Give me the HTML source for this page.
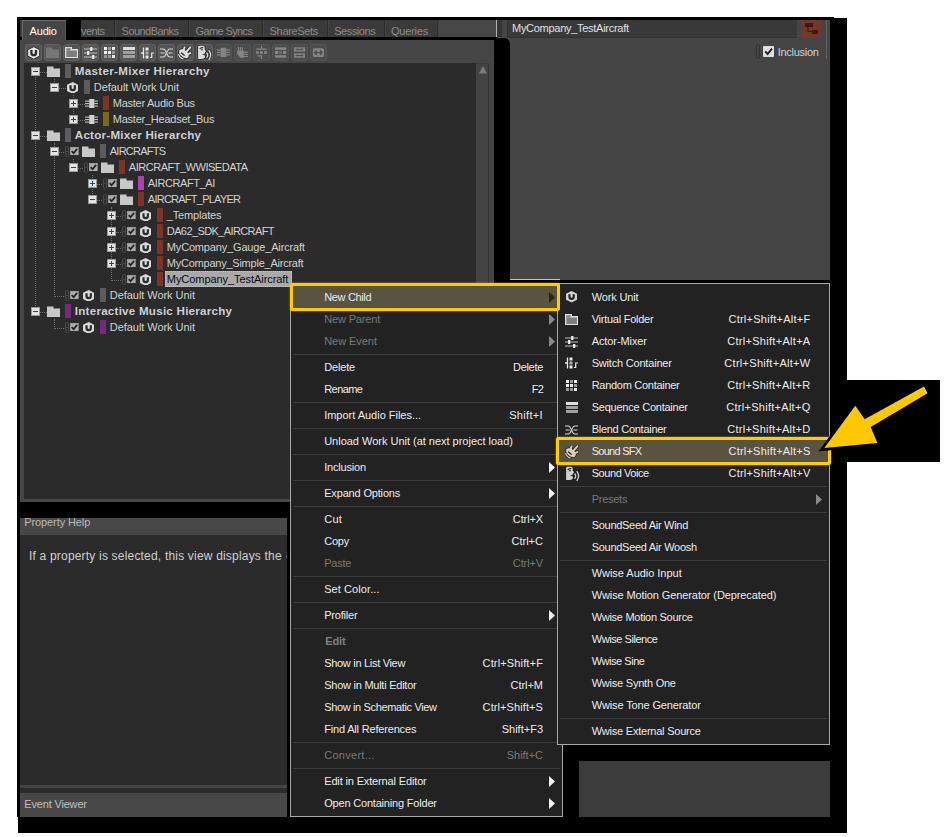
<!DOCTYPE html>
<html><head><meta charset="utf-8"><title>Wwise</title>
<style>
html,body{margin:0;padding:0;background:#fff;}
body{width:950px;height:837px;position:relative;overflow:hidden;font-family:"Liberation Sans",sans-serif;font-size:11px;}
.t{position:absolute;white-space:nowrap;font-family:"Liberation Sans",sans-serif;}
div,svg,span{box-sizing:border-box;}
</style></head><body>
<div style="position:absolute;left:17px;top:17px;width:817px;height:800px;background:#000;"></div>
<div style="position:absolute;left:18px;top:18px;width:829px;height:815px;background:#000;"></div>
<div style="position:absolute;left:20px;top:20px;width:477px;height:17px;background:#3a3a3a;"></div>
<div style="position:absolute;left:437.5px;top:20px;width:58.5px;height:17px;background:#474747;"></div>
<div style="position:absolute;left:496px;top:20px;width:1px;height:17px;background:#b0b0b0;"></div>
<div style="position:absolute;left:497px;top:20px;width:4.5px;height:17px;background:#353535;"></div>
<div style="position:absolute;left:114px;top:20px;width:1px;height:17px;background:#2c2c2c;"></div>
<div style="position:absolute;left:115px;top:20px;width:1px;height:17px;background:#444;"></div>
<div style="position:absolute;left:188px;top:20px;width:1px;height:17px;background:#2c2c2c;"></div>
<div style="position:absolute;left:189px;top:20px;width:1px;height:17px;background:#444;"></div>
<div style="position:absolute;left:262px;top:20px;width:1px;height:17px;background:#2c2c2c;"></div>
<div style="position:absolute;left:263px;top:20px;width:1px;height:17px;background:#444;"></div>
<div style="position:absolute;left:327px;top:20px;width:1px;height:17px;background:#2c2c2c;"></div>
<div style="position:absolute;left:328px;top:20px;width:1px;height:17px;background:#444;"></div>
<div style="position:absolute;left:384px;top:20px;width:1px;height:17px;background:#2c2c2c;"></div>
<div style="position:absolute;left:385px;top:20px;width:1px;height:17px;background:#444;"></div>
<div style="position:absolute;left:437px;top:20px;width:1px;height:17px;background:#2c2c2c;"></div>
<div style="position:absolute;left:438px;top:20px;width:1px;height:17px;background:#444;"></div>
<div style="position:absolute;left:22px;top:20px;width:44px;height:20px;background:#464646;border-top:1px solid #6a6a6a;border-left:1px solid #6a6a6a;border-right:1px solid #555;"></div>
<span class="t" id="tab_audio" style="top:23.0px;height:16px;line-height:16px;color:#ffffff;font-size:11px;letter-spacing:-0.161px;left:29.5px;">Audio</span>
<div style="position:absolute;left:66px;top:20px;width:14.5px;height:17px;background:#000;"></div>
<span class="t" id="tab_events" style="top:23.0px;height:16px;line-height:16px;color:#8c8c8c;font-size:11px;letter-spacing:-0.574px;left:81px;">vents</span>
<span class="t" id="tab_sb" style="top:23.0px;height:16px;line-height:16px;color:#8c8c8c;font-size:11px;letter-spacing:-0.555px;left:121.6px;">SoundBanks</span>
<span class="t" id="tab_gs" style="top:23.0px;height:16px;line-height:16px;color:#8c8c8c;font-size:11px;letter-spacing:-0.619px;left:195.6px;">Game Syncs</span>
<span class="t" id="tab_ss" style="top:23.0px;height:16px;line-height:16px;color:#8c8c8c;font-size:11px;letter-spacing:-0.334px;left:269.6px;">ShareSets</span>
<span class="t" id="tab_se" style="top:23.0px;height:16px;line-height:16px;color:#8c8c8c;font-size:11px;letter-spacing:-0.450px;left:334.2px;">Sessions</span>
<span class="t" id="tab_qu" style="top:23.0px;height:16px;line-height:16px;color:#8c8c8c;font-size:11px;letter-spacing:-0.220px;left:391px;">Queries</span>
<div style="position:absolute;left:66px;top:37px;width:431px;height:3px;background:#000;"></div>
<div style="position:absolute;left:17px;top:37px;width:5px;height:3px;background:#000;"></div>
<div style="position:absolute;left:20px;top:40px;width:474px;height:23px;background:#464646;"></div>
<div style="position:absolute;left:25px;top:44px;width:17px;height:17px;background:#555555;border:1px solid #626262;border-radius:3px;"></div>
<div style="position:absolute;left:44px;top:44px;width:17px;height:17px;background:#555555;border:1px solid #626262;border-radius:3px;"></div>
<div style="position:absolute;left:63px;top:44px;width:17px;height:17px;background:#555555;border:1px solid #626262;border-radius:3px;"></div>
<div style="position:absolute;left:82px;top:44px;width:17px;height:17px;background:#555555;border:1px solid #626262;border-radius:3px;"></div>
<div style="position:absolute;left:101px;top:44px;width:17px;height:17px;background:#555555;border:1px solid #626262;border-radius:3px;"></div>
<div style="position:absolute;left:120px;top:44px;width:17px;height:17px;background:#555555;border:1px solid #626262;border-radius:3px;"></div>
<div style="position:absolute;left:139px;top:44px;width:17px;height:17px;background:#555555;border:1px solid #626262;border-radius:3px;"></div>
<div style="position:absolute;left:158px;top:44px;width:17px;height:17px;background:#555555;border:1px solid #626262;border-radius:3px;"></div>
<div style="position:absolute;left:177px;top:44px;width:17px;height:17px;background:#555555;border:1px solid #626262;border-radius:3px;"></div>
<div style="position:absolute;left:196px;top:44px;width:17px;height:17px;background:#555555;border:1px solid #626262;border-radius:3px;"></div>
<div style="position:absolute;left:215px;top:44px;width:17px;height:17px;background:#4c4c4c;border:1px solid #555;border-radius:3px;"></div>
<div style="position:absolute;left:234px;top:44px;width:17px;height:17px;background:#4c4c4c;border:1px solid #555;border-radius:3px;"></div>
<div style="position:absolute;left:253px;top:44px;width:17px;height:17px;background:#4c4c4c;border:1px solid #555;border-radius:3px;"></div>
<div style="position:absolute;left:272px;top:44px;width:17px;height:17px;background:#4c4c4c;border:1px solid #555;border-radius:3px;"></div>
<div style="position:absolute;left:291px;top:44px;width:17px;height:17px;background:#4c4c4c;border:1px solid #555;border-radius:3px;"></div>
<div style="position:absolute;left:310px;top:44px;width:17px;height:17px;background:#4c4c4c;border:1px solid #555;border-radius:3px;"></div>
<svg style="position:absolute;left:27px;top:45.6px;" width="13.4" height="13.8" viewBox="0 0 13.4 13.8"><path d="M6.7 0.7 L12.7 3.7 L12.7 10.1 L6.7 13.1 L0.7 10.1 L0.7 3.7 Z" fill="#e6e6e6" stroke="#303030" stroke-width="1"/><path d="M4.4 4.1 V6.9 A2.3 2.3 0 0 0 9 6.9 V4.1" fill="none" stroke="#2e2e2e" stroke-width="2.3"/></svg>
<svg style="position:absolute;left:46px;top:47px;" width="13.4" height="11.4" viewBox="0 0 13.4 11.4"><path d="M0 0.4 H6.4 V2.6 H13.4 V11.4 H0 Z" fill="#777777"/></svg>
<svg style="position:absolute;left:64.9px;top:46.8px;" width="13.2" height="11.2" viewBox="0 0 13.2 11.2"><path d="M0.6 0.6 H6.3 V2.8 H12.6 V10.6 H0.6 Z" fill="#7e7e7e" stroke="#dedede" stroke-width="1.4"/><path d="M1.2 3.4H6.6" stroke="#dedede" stroke-width="0.6" opacity="0.5"/></svg>
<svg style="position:absolute;left:84px;top:46.5px;" width="13.2" height="12" viewBox="0 0 13.2 12"><path d="M0 2H13.2 M0 6H13.2 M0 10H13.2" stroke="#cfcfcf" stroke-width="0.9"/><rect x="6.2" y="0" width="2.2" height="4" fill="#f4f4f4"/><rect x="3.1" y="4" width="2.2" height="4" fill="#f4f4f4"/><rect x="8.1" y="8" width="2.2" height="4" fill="#f4f4f4"/></svg>
<svg style="position:absolute;left:104px;top:47px;" width="11" height="11" viewBox="0 0 11 11"><rect x="0" y="0" width="3" height="3" fill="#f0f0f0"/><rect x="4" y="0" width="3" height="3" fill="#9a9a9a"/><rect x="8" y="0" width="3" height="3" fill="#f0f0f0"/><rect x="0" y="4" width="3" height="3" fill="#f0f0f0"/><rect x="4" y="4" width="3" height="3" fill="#f0f0f0"/><rect x="8" y="4" width="3" height="3" fill="#9a9a9a"/><rect x="0" y="8" width="3" height="3" fill="#9a9a9a"/><rect x="4" y="8" width="3" height="3" fill="#9a9a9a"/><rect x="8" y="8" width="3" height="3" fill="#f0f0f0"/></svg>
<svg style="position:absolute;left:122.5px;top:47px;" width="12" height="11" viewBox="0 0 12 11"><rect x="0" y="0" width="12" height="3" fill="#dedede"/><rect x="0" y="4" width="12" height="3" fill="#a0a0a0"/><rect x="0" y="8" width="12" height="3" fill="#a0a0a0"/></svg>
<svg style="position:absolute;left:141px;top:46.5px;" width="13" height="12" viewBox="0 0 13 12"><path d="M0 6H2.5 M2.5 0.5V11.5" stroke="#e8e8e8" stroke-width="1.3" fill="none"/><rect x="4.5" y="0.5" width="3" height="3" fill="#e8e8e8"/><rect x="4.5" y="4.5" width="3" height="3" fill="#b0b0b0"/><rect x="4.5" y="8.5" width="3" height="3" fill="#e8e8e8"/><path d="M9 10.5 H10.7 V6 H13" stroke="#e8e8e8" stroke-width="1.2" fill="none"/></svg>
<svg style="position:absolute;left:160px;top:47.5px;" width="13" height="10" viewBox="0 0 13 10"><path d="M0 1 H3.4 C6.2 1 6.8 9 9.6 9 H13" stroke="#dadada" stroke-width="1.05" fill="none"/><path d="M0 9 H3.4 C6.2 9 6.8 1 9.6 1 H13" stroke="#dadada" stroke-width="1.05" fill="none"/><path d="M0.6 5 H4.6 M8.4 5 H12.4" stroke="#dadada" stroke-width="1" fill="none"/></svg>
<svg style="position:absolute;left:178.4px;top:46px;" width="13.5" height="13.5" viewBox="0 0 13.5 13.5"><path d="M5.5 4.4 L6.6 1.3 M8.3 5.8 L12.3 1.3 M9.8 8.1 L12.4 7.1" stroke-linecap="round" fill="none" stroke="#2a2a2a" stroke-width="3.4"/><ellipse cx="5.9" cy="7.7" rx="5.6" ry="3.4" transform="rotate(40 5.9 7.7)" fill="#2a2a2a" stroke="#2a2a2a" stroke-width="1.6"/><path d="M0.7 8.6 Q1.6 11.8 5 12.9" fill="none" stroke-linecap="round" stroke="#2a2a2a" stroke-width="2.8"/><path d="M5.5 4.4 L6.6 1.3 M8.3 5.8 L12.3 1.3 M9.8 8.1 L12.4 7.1" stroke-linecap="round" fill="none" stroke="#dedede" stroke-width="1.9"/><ellipse cx="5.9" cy="7.7" rx="5.6" ry="3.4" transform="rotate(40 5.9 7.7)" fill="#dedede"/><path d="M0.7 8.6 Q1.6 11.8 5 12.9" fill="none" stroke-linecap="round" stroke="#dedede" stroke-width="1.3"/><path d="M3.6 6.9 L6.2 9.3" stroke="#2a2a2a" stroke-width="1.3" stroke-linecap="round"/></svg>
<svg style="position:absolute;left:197px;top:45.2px;" width="15.5" height="14.5" viewBox="-0.5 -0.8 15.5 14.5"><path d="M0.6 1.4 Q0.6 0 2 0 H5.6 Q7.2 0 7.2 1.8 V3.6 L8.6 5.6 L7.4 6.4 V7.6 L4.6 8.8 L7.4 9.8 V11.8 Q6.4 13.2 4.4 13.2 H0.6 Z" fill="#2a2a2a" stroke="#2a2a2a" stroke-width="1.5" stroke-linejoin="round"/><path d="M9.4 7.2 Q11 9.4 9.4 11.6 M11.6 4.8 Q14.6 9.4 11.6 13.6" stroke="#2a2a2a" stroke-width="2.8" fill="none" stroke-linecap="round"/><path d="M0.6 1.4 Q0.6 0 2 0 H5.6 Q7.2 0 7.2 1.8 V3.6 L8.6 5.6 L7.4 6.4 V7.6 L4.6 8.8 L7.4 9.8 V11.8 Q6.4 13.2 4.4 13.2 H0.6 Z" fill="#dedede"/><path d="M2.2 3.2 Q3.6 1.2 5.8 2 M3.4 4 H5.4" stroke="#2a2a2a" stroke-width="1.1" fill="none"/><path d="M9.4 7.2 Q11 9.4 9.4 11.6 M11.6 4.8 Q14.6 9.4 11.6 13.6" stroke="#dedede" stroke-width="1.3" fill="none" stroke-linecap="round"/></svg>
<svg style="position:absolute;left:215px;top:44px;" width="17" height="17" viewBox="0 0 17 17"><rect x="5.7" y="3.8" width="5.7" height="9.2" fill="#858585"/><path d="M2 6.1H5.7 M2 8.4H5.7 M2 10.8H5.7 M11.4 6.1H15 M11.4 8.4H15 M11.4 10.8H15" stroke="#858585" stroke-width="1.2"/></svg>
<svg style="position:absolute;left:234px;top:44px;" width="17" height="17" viewBox="0 0 17 17"><path d="M3.2 6.7 H9.9 V13.7 H6.4 L3.2 10 Z" fill="#858585"/><path d="M4.4 3V7 M6.4 3V7 M8.4 3V7" stroke="#858585" stroke-width="1.1"/><path d="M9.9 8.4H13.9 M9.9 10.5H13.9 M9.9 12.5H13.9" stroke="#858585" stroke-width="1.1"/></svg>
<svg style="position:absolute;left:253px;top:44px;" width="17" height="17" viewBox="0 0 17 17"><path d="M8.5 1.7V5.1 M3.1 5.1H13.8" stroke="#858585" stroke-width="1.2" fill="none"/><rect x="3.1" y="7.1" width="2.6" height="2.8" fill="#858585"/><rect x="7" y="7.1" width="2.8" height="2.8" fill="#858585"/><rect x="11.1" y="7.1" width="2.7" height="2.8" fill="#858585"/><path d="M4.4 11.8 H8.5 V15" stroke="#858585" stroke-width="1.2" fill="none"/></svg>
<svg style="position:absolute;left:272px;top:44px;" width="17" height="17" viewBox="0 0 17 17"><rect x="3" y="3.3" width="11.2" height="2.6" fill="#858585"/><rect x="3" y="7.1" width="3.2" height="2.8" fill="#8c8c8c"/><rect x="7.2" y="7.1" width="2.8" height="2.8" fill="#6c6c6c"/><rect x="11" y="7.1" width="3.2" height="2.8" fill="#8c8c8c"/><rect x="3" y="11.2" width="11.2" height="2.5" fill="#858585"/></svg>
<svg style="position:absolute;left:291px;top:44px;" width="17" height="17" viewBox="0 0 17 17"><rect x="3" y="3.3" width="11" height="4.3" fill="#858585"/><rect x="3" y="9.3" width="11" height="4.4" fill="#858585"/><path d="M4.6 5.45H12.4 M4.6 11.5H12.4" stroke="#4f4f4f" stroke-width="1"/><path d="M5 5.45 L6.4 4.2 L7.2 5.45 L6.4 6.7 Z M12 5.45 L10.6 4.2 L9.8 5.45 L10.6 6.7 Z M5 11.5 L6.4 10.25 L7.2 11.5 L6.4 12.75 Z M12 11.5 L10.6 10.25 L9.8 11.5 L10.6 12.75 Z" fill="#4f4f4f"/></svg>
<svg style="position:absolute;left:310px;top:44px;" width="17" height="17" viewBox="0 0 17 17"><rect x="2.9" y="4.2" width="11.1" height="8.8" rx="1.6" fill="#858585"/><path d="M3.8 8.6 L6.4 5.8 L7.6 8.6 L6.4 11.4 Z M13.1 8.6 L10.5 5.8 L9.3 8.6 L10.5 11.4 Z" fill="#4f4f4f"/><path d="M6 8.6H11" stroke="#4f4f4f" stroke-width="1.1"/></svg>
<div style="position:absolute;left:20px;top:63px;width:474px;height:439px;background:#464646;"></div>
<div style="position:absolute;left:23.5px;top:63px;width:452px;height:436px;background:#2b2b2b;"></div>
<div style="position:absolute;left:475.8px;top:63px;width:13.7px;height:436px;background:#434343;border-right:1px solid #363636;border-top:1px solid #3a3a3a;"></div>
<svg style="position:absolute;left:478.5px;top:66.3px;" width="8" height="8" viewBox="0 0 8 8"><path d="M4 0 L8 7.5 H0 Z" fill="#7c7c7c"/></svg>
<div style="position:absolute;left:35px;top:76.5px;width:0;height:231.0px;border-left:1px dotted #707070;"></div>
<div style="position:absolute;left:54px;top:78.5px;width:0;height:5.0px;border-left:1px dotted #707070;"></div>
<div style="position:absolute;left:73px;top:94.5px;width:0;height:21.0px;border-left:1px dotted #707070;"></div>
<div style="position:absolute;left:54px;top:142.5px;width:0;height:154.0px;border-left:1px dotted #707070;"></div>
<div style="position:absolute;left:73px;top:158.5px;width:0;height:5.0px;border-left:1px dotted #707070;"></div>
<div style="position:absolute;left:92px;top:174.5px;width:0;height:21.0px;border-left:1px dotted #707070;"></div>
<div style="position:absolute;left:111px;top:206.5px;width:0;height:74.0px;border-left:1px dotted #707070;"></div>
<div style="position:absolute;left:54px;top:318.5px;width:0;height:10.0px;border-left:1px dotted #707070;"></div>
<div style="position:absolute;left:40px;top:71.5px;width:7px;height:0;border-top:1px dotted #707070;"></div>
<div style="position:absolute;left:31px;top:67.0px;width:9px;height:9px;background:#e4e4e4;border:1px solid #9a9a9a;"></div>
<div style="position:absolute;left:33px;top:71.0px;width:5px;height:1px;background:#2a3a9a;"></div>
<svg style="position:absolute;left:47px;top:66.0px;" width="13" height="11" viewBox="0 0 13 11"><path d="M0 0.5 H6.5 V2.5 H13 V11 H0 Z" fill="#c8c8c8"/></svg>
<div style="position:absolute;left:65.2px;top:63.9px;width:5.8px;height:14px;background:#5c5c5c;"></div>
<span class="t" id="tr0" style="top:63.0px;height:16px;line-height:16px;color:#cdd0d8;font-size:11.6px;letter-spacing:0.308px;font-weight:bold;left:74.8px;">Master-Mixer Hierarchy</span>
<div style="position:absolute;left:59px;top:87.5px;width:7px;height:0;border-top:1px dotted #707070;"></div>
<div style="position:absolute;left:50px;top:83.0px;width:9px;height:9px;background:#e4e4e4;border:1px solid #9a9a9a;"></div>
<div style="position:absolute;left:52px;top:87.0px;width:5px;height:1px;background:#2a3a9a;"></div>
<svg style="position:absolute;left:67px;top:81.5px;" width="11.399999999999999" height="11.78" viewBox="0 0 12 12.4"><path d="M6 0 L12 3 L12 9.4 L6 12.4 L0 9.4 L0 3 Z" fill="#dadada"/><path d="M3.7 3.4 V6.2 A2.3 2.3 0 0 0 8.3 6.2 V3.4" fill="none" stroke="#2b2b2b" stroke-width="2.3"/></svg>
<div style="position:absolute;left:84.2px;top:79.9px;width:5.8px;height:14px;background:#5c5c5c;"></div>
<span class="t" id="tr1" style="top:79.0px;height:16px;line-height:16px;color:#d2d2d2;font-size:11px;letter-spacing:-0.050px;left:93.8px;">Default Work Unit</span>
<div style="position:absolute;left:78px;top:103.5px;width:7px;height:0;border-top:1px dotted #707070;"></div>
<div style="position:absolute;left:69px;top:99.0px;width:9px;height:9px;background:#e4e4e4;border:1px solid #9a9a9a;"></div>
<div style="position:absolute;left:71px;top:103.0px;width:5px;height:1px;background:#2a3a9a;"></div>
<div style="position:absolute;left:73px;top:101.0px;width:1px;height:5px;background:#2a3a9a;"></div>
<svg style="position:absolute;left:84.7px;top:98.9px;" width="13.4" height="9.2" viewBox="0 0 13.4 9.2"><rect x="4.2" y="0" width="5.2" height="9.2" fill="#d0d0d0"/><path d="M0 2.1H4.2 M0 4.6H4.2 M0 7.1H4.2 M9.4 2.1H13.4 M9.4 4.6H13.4 M9.4 7.1H13.4" stroke="#d0d0d0" stroke-width="1"/></svg>
<div style="position:absolute;left:103.2px;top:95.9px;width:5.8px;height:14px;background:#7a3525;"></div>
<span class="t" id="tr2" style="top:95.0px;height:16px;line-height:16px;color:#d2d2d2;font-size:11px;letter-spacing:-0.268px;left:112.8px;">Master Audio Bus</span>
<div style="position:absolute;left:78px;top:119.5px;width:7px;height:0;border-top:1px dotted #707070;"></div>
<div style="position:absolute;left:69px;top:115.0px;width:9px;height:9px;background:#e4e4e4;border:1px solid #9a9a9a;"></div>
<div style="position:absolute;left:71px;top:119.0px;width:5px;height:1px;background:#2a3a9a;"></div>
<div style="position:absolute;left:73px;top:117.0px;width:1px;height:5px;background:#2a3a9a;"></div>
<svg style="position:absolute;left:84.7px;top:114.9px;" width="13.4" height="9.2" viewBox="0 0 13.4 9.2"><rect x="4.2" y="0" width="5.2" height="9.2" fill="#d0d0d0"/><path d="M0 2.1H4.2 M0 4.6H4.2 M0 7.1H4.2 M9.4 2.1H13.4 M9.4 4.6H13.4 M9.4 7.1H13.4" stroke="#d0d0d0" stroke-width="1"/></svg>
<div style="position:absolute;left:103.2px;top:111.9px;width:5.8px;height:14px;background:#7a6a12;"></div>
<span class="t" id="tr3" style="top:111.0px;height:16px;line-height:16px;color:#d2d2d2;font-size:11px;letter-spacing:-0.241px;left:112.8px;">Master_Headset_Bus</span>
<div style="position:absolute;left:40px;top:135.5px;width:7px;height:0;border-top:1px dotted #707070;"></div>
<div style="position:absolute;left:31px;top:131.0px;width:9px;height:9px;background:#e4e4e4;border:1px solid #9a9a9a;"></div>
<div style="position:absolute;left:33px;top:135.0px;width:5px;height:1px;background:#2a3a9a;"></div>
<svg style="position:absolute;left:47px;top:130.0px;" width="13" height="11" viewBox="0 0 13 11"><path d="M0 0.5 H6.5 V2.5 H13 V11 H0 Z" fill="#c8c8c8"/></svg>
<div style="position:absolute;left:65.2px;top:127.9px;width:5.8px;height:14px;background:#5c5c5c;"></div>
<span class="t" id="tr4" style="top:127.0px;height:16px;line-height:16px;color:#cdd0d8;font-size:11.6px;letter-spacing:0.253px;font-weight:bold;left:74.8px;">Actor-Mixer Hierarchy</span>
<div style="position:absolute;left:59px;top:151.5px;width:7px;height:0;border-top:1px dotted #707070;"></div>
<div style="position:absolute;left:50px;top:147.0px;width:9px;height:9px;background:#e4e4e4;border:1px solid #9a9a9a;"></div>
<div style="position:absolute;left:52px;top:151.0px;width:5px;height:1px;background:#2a3a9a;"></div>
<div style="position:absolute;left:65px;top:146.0px;width:3.5px;height:10.5px;background:transparent;border:1px solid #4c4c4c;border-radius:1.7px;"></div>
<div style="position:absolute;left:65.5px;top:150.9px;width:2.5px;height:1px;background:#454545;"></div>
<svg style="position:absolute;left:70px;top:146.9px;" width="8.6" height="8.6" viewBox="0 0 8.6 8.6"><rect x="0" y="0" width="8.6" height="8.6" fill="#acacac"/><rect x="0.25" y="0.25" width="8.1" height="8.1" fill="none" stroke="#8a8a8a" stroke-width="0.5"/><path d="M1.7 4.1 L3.6 6.2 L7.1 1.9" stroke="#1e1e1e" stroke-width="1.7" fill="none"/></svg>
<svg style="position:absolute;left:82px;top:146.0px;" width="13" height="11" viewBox="0 0 13 11"><path d="M0 0.5 H6.5 V2.5 H13 V11 H0 Z" fill="#c8c8c8"/></svg>
<div style="position:absolute;left:100.2px;top:143.9px;width:5.8px;height:14px;background:#5c5c5c;"></div>
<span class="t" id="tr5" style="top:143.0px;height:16px;line-height:16px;color:#d2d2d2;font-size:11px;letter-spacing:-0.768px;left:109.8px;">AIRCRAFTS</span>
<div style="position:absolute;left:78px;top:167.5px;width:7px;height:0;border-top:1px dotted #707070;"></div>
<div style="position:absolute;left:69px;top:163.0px;width:9px;height:9px;background:#e4e4e4;border:1px solid #9a9a9a;"></div>
<div style="position:absolute;left:71px;top:167.0px;width:5px;height:1px;background:#2a3a9a;"></div>
<div style="position:absolute;left:84px;top:162.0px;width:3.5px;height:10.5px;background:transparent;border:1px solid #4c4c4c;border-radius:1.7px;"></div>
<div style="position:absolute;left:84.5px;top:166.9px;width:2.5px;height:1px;background:#454545;"></div>
<svg style="position:absolute;left:89px;top:162.9px;" width="8.6" height="8.6" viewBox="0 0 8.6 8.6"><rect x="0" y="0" width="8.6" height="8.6" fill="#acacac"/><rect x="0.25" y="0.25" width="8.1" height="8.1" fill="none" stroke="#8a8a8a" stroke-width="0.5"/><path d="M1.7 4.1 L3.6 6.2 L7.1 1.9" stroke="#1e1e1e" stroke-width="1.7" fill="none"/></svg>
<svg style="position:absolute;left:101px;top:162.0px;" width="13" height="11" viewBox="0 0 13 11"><path d="M0 0.5 H6.5 V2.5 H13 V11 H0 Z" fill="#c8c8c8"/></svg>
<div style="position:absolute;left:119.2px;top:159.9px;width:5.8px;height:14px;background:#7a3525;"></div>
<span class="t" id="tr6" style="top:159.0px;height:16px;line-height:16px;color:#d2d2d2;font-size:11px;letter-spacing:-0.478px;left:128.8px;">AIRCRAFT_WWISEDATA</span>
<div style="position:absolute;left:97px;top:183.5px;width:7px;height:0;border-top:1px dotted #707070;"></div>
<div style="position:absolute;left:88px;top:179.0px;width:9px;height:9px;background:#e4e4e4;border:1px solid #9a9a9a;"></div>
<div style="position:absolute;left:90px;top:183.0px;width:5px;height:1px;background:#2a3a9a;"></div>
<div style="position:absolute;left:92px;top:181.0px;width:1px;height:5px;background:#2a3a9a;"></div>
<div style="position:absolute;left:103px;top:178.0px;width:3.5px;height:10.5px;background:transparent;border:1px solid #4c4c4c;border-radius:1.7px;"></div>
<div style="position:absolute;left:103.5px;top:182.9px;width:2.5px;height:1px;background:#454545;"></div>
<svg style="position:absolute;left:108px;top:178.9px;" width="8.6" height="8.6" viewBox="0 0 8.6 8.6"><rect x="0" y="0" width="8.6" height="8.6" fill="#acacac"/><rect x="0.25" y="0.25" width="8.1" height="8.1" fill="none" stroke="#8a8a8a" stroke-width="0.5"/><path d="M1.7 4.1 L3.6 6.2 L7.1 1.9" stroke="#1e1e1e" stroke-width="1.7" fill="none"/></svg>
<svg style="position:absolute;left:120px;top:178.0px;" width="13" height="11" viewBox="0 0 13 11"><path d="M0 0.5 H6.5 V2.5 H13 V11 H0 Z" fill="#c8c8c8"/></svg>
<div style="position:absolute;left:138.2px;top:175.9px;width:5.8px;height:14px;background:#b040b0;"></div>
<span class="t" id="tr7" style="top:175.0px;height:16px;line-height:16px;color:#d2d2d2;font-size:11px;letter-spacing:-0.402px;left:147.79999999999998px;">AIRCRAFT_AI</span>
<div style="position:absolute;left:97px;top:199.5px;width:7px;height:0;border-top:1px dotted #707070;"></div>
<div style="position:absolute;left:88px;top:195.0px;width:9px;height:9px;background:#e4e4e4;border:1px solid #9a9a9a;"></div>
<div style="position:absolute;left:90px;top:199.0px;width:5px;height:1px;background:#2a3a9a;"></div>
<div style="position:absolute;left:103px;top:194.0px;width:3.5px;height:10.5px;background:transparent;border:1px solid #4c4c4c;border-radius:1.7px;"></div>
<div style="position:absolute;left:103.5px;top:198.9px;width:2.5px;height:1px;background:#454545;"></div>
<svg style="position:absolute;left:108px;top:194.9px;" width="8.6" height="8.6" viewBox="0 0 8.6 8.6"><rect x="0" y="0" width="8.6" height="8.6" fill="#acacac"/><rect x="0.25" y="0.25" width="8.1" height="8.1" fill="none" stroke="#8a8a8a" stroke-width="0.5"/><path d="M1.7 4.1 L3.6 6.2 L7.1 1.9" stroke="#1e1e1e" stroke-width="1.7" fill="none"/></svg>
<svg style="position:absolute;left:120px;top:194.0px;" width="13" height="11" viewBox="0 0 13 11"><path d="M0 0.5 H6.5 V2.5 H13 V11 H0 Z" fill="#c8c8c8"/></svg>
<div style="position:absolute;left:138.2px;top:191.9px;width:5.8px;height:14px;background:#7a3525;"></div>
<span class="t" id="tr8" style="top:191.0px;height:16px;line-height:16px;color:#d2d2d2;font-size:11px;letter-spacing:-0.751px;left:147.79999999999998px;">AIRCRAFT_PLAYER</span>
<div style="position:absolute;left:116px;top:215.5px;width:7px;height:0;border-top:1px dotted #707070;"></div>
<div style="position:absolute;left:107px;top:211.0px;width:9px;height:9px;background:#e4e4e4;border:1px solid #9a9a9a;"></div>
<div style="position:absolute;left:109px;top:215.0px;width:5px;height:1px;background:#2a3a9a;"></div>
<div style="position:absolute;left:111px;top:213.0px;width:1px;height:5px;background:#2a3a9a;"></div>
<div style="position:absolute;left:122px;top:210.0px;width:3.5px;height:10.5px;background:transparent;border:1px solid #4c4c4c;border-radius:1.7px;"></div>
<div style="position:absolute;left:122.5px;top:214.9px;width:2.5px;height:1px;background:#454545;"></div>
<svg style="position:absolute;left:127px;top:210.9px;" width="8.6" height="8.6" viewBox="0 0 8.6 8.6"><rect x="0" y="0" width="8.6" height="8.6" fill="#acacac"/><rect x="0.25" y="0.25" width="8.1" height="8.1" fill="none" stroke="#8a8a8a" stroke-width="0.5"/><path d="M1.7 4.1 L3.6 6.2 L7.1 1.9" stroke="#1e1e1e" stroke-width="1.7" fill="none"/></svg>
<svg style="position:absolute;left:140px;top:209.5px;" width="11.399999999999999" height="11.78" viewBox="0 0 12 12.4"><path d="M6 0 L12 3 L12 9.4 L6 12.4 L0 9.4 L0 3 Z" fill="#dadada"/><path d="M3.7 3.4 V6.2 A2.3 2.3 0 0 0 8.3 6.2 V3.4" fill="none" stroke="#2b2b2b" stroke-width="2.3"/></svg>
<div style="position:absolute;left:157.2px;top:207.9px;width:5.8px;height:14px;background:#7a3525;"></div>
<span class="t" id="tr9" style="top:207.0px;height:16px;line-height:16px;color:#d2d2d2;font-size:11px;letter-spacing:-0.173px;left:166.79999999999998px;">_Templates</span>
<div style="position:absolute;left:116px;top:231.5px;width:7px;height:0;border-top:1px dotted #707070;"></div>
<div style="position:absolute;left:107px;top:227.0px;width:9px;height:9px;background:#e4e4e4;border:1px solid #9a9a9a;"></div>
<div style="position:absolute;left:109px;top:231.0px;width:5px;height:1px;background:#2a3a9a;"></div>
<div style="position:absolute;left:111px;top:229.0px;width:1px;height:5px;background:#2a3a9a;"></div>
<div style="position:absolute;left:122px;top:226.0px;width:3.5px;height:10.5px;background:transparent;border:1px solid #4c4c4c;border-radius:1.7px;"></div>
<div style="position:absolute;left:122.5px;top:230.9px;width:2.5px;height:1px;background:#454545;"></div>
<svg style="position:absolute;left:127px;top:226.9px;" width="8.6" height="8.6" viewBox="0 0 8.6 8.6"><rect x="0" y="0" width="8.6" height="8.6" fill="#acacac"/><rect x="0.25" y="0.25" width="8.1" height="8.1" fill="none" stroke="#8a8a8a" stroke-width="0.5"/><path d="M1.7 4.1 L3.6 6.2 L7.1 1.9" stroke="#1e1e1e" stroke-width="1.7" fill="none"/></svg>
<svg style="position:absolute;left:140px;top:225.5px;" width="11.399999999999999" height="11.78" viewBox="0 0 12 12.4"><path d="M6 0 L12 3 L12 9.4 L6 12.4 L0 9.4 L0 3 Z" fill="#dadada"/><path d="M3.7 3.4 V6.2 A2.3 2.3 0 0 0 8.3 6.2 V3.4" fill="none" stroke="#2b2b2b" stroke-width="2.3"/></svg>
<div style="position:absolute;left:157.2px;top:223.9px;width:5.8px;height:14px;background:#7a3525;"></div>
<span class="t" id="tr10" style="top:223.0px;height:16px;line-height:16px;color:#d2d2d2;font-size:11px;letter-spacing:-0.605px;left:166.79999999999998px;">DA62_SDK_AIRCRAFT</span>
<div style="position:absolute;left:116px;top:247.5px;width:7px;height:0;border-top:1px dotted #707070;"></div>
<div style="position:absolute;left:107px;top:243.0px;width:9px;height:9px;background:#e4e4e4;border:1px solid #9a9a9a;"></div>
<div style="position:absolute;left:109px;top:247.0px;width:5px;height:1px;background:#2a3a9a;"></div>
<div style="position:absolute;left:111px;top:245.0px;width:1px;height:5px;background:#2a3a9a;"></div>
<div style="position:absolute;left:122px;top:242.0px;width:3.5px;height:10.5px;background:transparent;border:1px solid #4c4c4c;border-radius:1.7px;"></div>
<div style="position:absolute;left:122.5px;top:246.9px;width:2.5px;height:1px;background:#454545;"></div>
<svg style="position:absolute;left:127px;top:242.9px;" width="8.6" height="8.6" viewBox="0 0 8.6 8.6"><rect x="0" y="0" width="8.6" height="8.6" fill="#acacac"/><rect x="0.25" y="0.25" width="8.1" height="8.1" fill="none" stroke="#8a8a8a" stroke-width="0.5"/><path d="M1.7 4.1 L3.6 6.2 L7.1 1.9" stroke="#1e1e1e" stroke-width="1.7" fill="none"/></svg>
<svg style="position:absolute;left:140px;top:241.5px;" width="11.399999999999999" height="11.78" viewBox="0 0 12 12.4"><path d="M6 0 L12 3 L12 9.4 L6 12.4 L0 9.4 L0 3 Z" fill="#dadada"/><path d="M3.7 3.4 V6.2 A2.3 2.3 0 0 0 8.3 6.2 V3.4" fill="none" stroke="#2b2b2b" stroke-width="2.3"/></svg>
<div style="position:absolute;left:157.2px;top:239.9px;width:5.8px;height:14px;background:#7a3525;"></div>
<span class="t" id="tr11" style="top:239.0px;height:16px;line-height:16px;color:#d2d2d2;font-size:11px;letter-spacing:-0.163px;left:166.79999999999998px;">MyCompany_Gauge_Aircraft</span>
<div style="position:absolute;left:116px;top:263.5px;width:7px;height:0;border-top:1px dotted #707070;"></div>
<div style="position:absolute;left:107px;top:259.0px;width:9px;height:9px;background:#e4e4e4;border:1px solid #9a9a9a;"></div>
<div style="position:absolute;left:109px;top:263.0px;width:5px;height:1px;background:#2a3a9a;"></div>
<div style="position:absolute;left:111px;top:261.0px;width:1px;height:5px;background:#2a3a9a;"></div>
<div style="position:absolute;left:122px;top:258.0px;width:3.5px;height:10.5px;background:transparent;border:1px solid #4c4c4c;border-radius:1.7px;"></div>
<div style="position:absolute;left:122.5px;top:262.9px;width:2.5px;height:1px;background:#454545;"></div>
<svg style="position:absolute;left:127px;top:258.9px;" width="8.6" height="8.6" viewBox="0 0 8.6 8.6"><rect x="0" y="0" width="8.6" height="8.6" fill="#acacac"/><rect x="0.25" y="0.25" width="8.1" height="8.1" fill="none" stroke="#8a8a8a" stroke-width="0.5"/><path d="M1.7 4.1 L3.6 6.2 L7.1 1.9" stroke="#1e1e1e" stroke-width="1.7" fill="none"/></svg>
<svg style="position:absolute;left:140px;top:257.5px;" width="11.399999999999999" height="11.78" viewBox="0 0 12 12.4"><path d="M6 0 L12 3 L12 9.4 L6 12.4 L0 9.4 L0 3 Z" fill="#dadada"/><path d="M3.7 3.4 V6.2 A2.3 2.3 0 0 0 8.3 6.2 V3.4" fill="none" stroke="#2b2b2b" stroke-width="2.3"/></svg>
<div style="position:absolute;left:157.2px;top:255.9px;width:5.8px;height:14px;background:#7a3525;"></div>
<span class="t" id="tr12" style="top:255.0px;height:16px;line-height:16px;color:#d2d2d2;font-size:11px;letter-spacing:-0.235px;left:166.79999999999998px;">MyCompany_Simple_Aircraft</span>
<div style="position:absolute;left:111px;top:279.5px;width:12px;height:0;border-top:1px dotted #707070;"></div>
<div style="position:absolute;left:122px;top:274.0px;width:3.5px;height:10.5px;background:transparent;border:1px solid #4c4c4c;border-radius:1.7px;"></div>
<div style="position:absolute;left:122.5px;top:278.9px;width:2.5px;height:1px;background:#454545;"></div>
<svg style="position:absolute;left:127px;top:274.9px;" width="8.6" height="8.6" viewBox="0 0 8.6 8.6"><rect x="0" y="0" width="8.6" height="8.6" fill="#acacac"/><rect x="0.25" y="0.25" width="8.1" height="8.1" fill="none" stroke="#8a8a8a" stroke-width="0.5"/><path d="M1.7 4.1 L3.6 6.2 L7.1 1.9" stroke="#1e1e1e" stroke-width="1.7" fill="none"/></svg>
<svg style="position:absolute;left:140px;top:273.5px;" width="11.399999999999999" height="11.78" viewBox="0 0 12 12.4"><path d="M6 0 L12 3 L12 9.4 L6 12.4 L0 9.4 L0 3 Z" fill="#dadada"/><path d="M3.7 3.4 V6.2 A2.3 2.3 0 0 0 8.3 6.2 V3.4" fill="none" stroke="#2b2b2b" stroke-width="2.3"/></svg>
<div style="position:absolute;left:157.2px;top:271.9px;width:5.8px;height:14px;background:#7a3525;"></div>
<div style="position:absolute;left:164.5px;top:271px;width:127.5px;height:15.5px;background:#a9a9a9;border:1px dotted #c4c4c4;"></div>
<span class="t" id="tr13" style="top:271.0px;height:16px;line-height:16px;color:#0a0a14;font-size:11px;letter-spacing:-0.061px;left:166.79999999999998px;">MyCompany_TestAircraft</span>
<div style="position:absolute;left:54px;top:295.5px;width:12px;height:0;border-top:1px dotted #707070;"></div>
<div style="position:absolute;left:65px;top:290.0px;width:3.5px;height:10.5px;background:transparent;border:1px solid #4c4c4c;border-radius:1.7px;"></div>
<div style="position:absolute;left:65.5px;top:294.9px;width:2.5px;height:1px;background:#454545;"></div>
<svg style="position:absolute;left:70px;top:290.9px;" width="8.6" height="8.6" viewBox="0 0 8.6 8.6"><rect x="0" y="0" width="8.6" height="8.6" fill="#acacac"/><rect x="0.25" y="0.25" width="8.1" height="8.1" fill="none" stroke="#8a8a8a" stroke-width="0.5"/><path d="M1.7 4.1 L3.6 6.2 L7.1 1.9" stroke="#1e1e1e" stroke-width="1.7" fill="none"/></svg>
<svg style="position:absolute;left:83px;top:289.5px;" width="11.399999999999999" height="11.78" viewBox="0 0 12 12.4"><path d="M6 0 L12 3 L12 9.4 L6 12.4 L0 9.4 L0 3 Z" fill="#dadada"/><path d="M3.7 3.4 V6.2 A2.3 2.3 0 0 0 8.3 6.2 V3.4" fill="none" stroke="#2b2b2b" stroke-width="2.3"/></svg>
<div style="position:absolute;left:100.2px;top:287.9px;width:5.8px;height:14px;background:#5c5c5c;"></div>
<span class="t" id="tr14" style="top:287.0px;height:16px;line-height:16px;color:#d2d2d2;font-size:11px;letter-spacing:-0.050px;left:109.8px;">Default Work Unit</span>
<div style="position:absolute;left:40px;top:311.5px;width:7px;height:0;border-top:1px dotted #707070;"></div>
<div style="position:absolute;left:31px;top:307.0px;width:9px;height:9px;background:#e4e4e4;border:1px solid #9a9a9a;"></div>
<div style="position:absolute;left:33px;top:311.0px;width:5px;height:1px;background:#2a3a9a;"></div>
<svg style="position:absolute;left:47px;top:306.0px;" width="13" height="11" viewBox="0 0 13 11"><path d="M0 0.5 H6.5 V2.5 H13 V11 H0 Z" fill="#c8c8c8"/></svg>
<div style="position:absolute;left:65.2px;top:303.9px;width:5.8px;height:14px;background:#7c277f;"></div>
<span class="t" id="tr15" style="top:303.0px;height:16px;line-height:16px;color:#cdd0d8;font-size:11.6px;letter-spacing:0.246px;font-weight:bold;left:74.8px;">Interactive Music Hierarchy</span>
<div style="position:absolute;left:54px;top:327.5px;width:12px;height:0;border-top:1px dotted #707070;"></div>
<div style="position:absolute;left:65px;top:322.0px;width:3.5px;height:10.5px;background:transparent;border:1px solid #4c4c4c;border-radius:1.7px;"></div>
<div style="position:absolute;left:65.5px;top:326.9px;width:2.5px;height:1px;background:#454545;"></div>
<svg style="position:absolute;left:70px;top:322.9px;" width="8.6" height="8.6" viewBox="0 0 8.6 8.6"><rect x="0" y="0" width="8.6" height="8.6" fill="#acacac"/><rect x="0.25" y="0.25" width="8.1" height="8.1" fill="none" stroke="#8a8a8a" stroke-width="0.5"/><path d="M1.7 4.1 L3.6 6.2 L7.1 1.9" stroke="#1e1e1e" stroke-width="1.7" fill="none"/></svg>
<svg style="position:absolute;left:83px;top:321.5px;" width="11.399999999999999" height="11.78" viewBox="0 0 12 12.4"><path d="M6 0 L12 3 L12 9.4 L6 12.4 L0 9.4 L0 3 Z" fill="#dadada"/><path d="M3.7 3.4 V6.2 A2.3 2.3 0 0 0 8.3 6.2 V3.4" fill="none" stroke="#2b2b2b" stroke-width="2.3"/></svg>
<div style="position:absolute;left:100.2px;top:319.9px;width:5.8px;height:14px;background:#7c277f;"></div>
<span class="t" id="tr16" style="top:319.0px;height:16px;line-height:16px;color:#d2d2d2;font-size:11px;letter-spacing:-0.050px;left:109.8px;">Default Work Unit</span>
<div style="position:absolute;left:501.5px;top:20px;width:328.5px;height:17px;background:#454545;"></div>
<div style="position:absolute;left:497px;top:37px;width:333px;height:243px;background:#454545;"></div>
<div style="position:absolute;left:494px;top:37.5px;width:16px;height:250px;background:#000;border-top-right-radius:6px;"></div>
<div style="position:absolute;left:507px;top:20px;width:290px;height:17.5px;background:#393939;border-bottom:1px solid #303030;border-left:1px solid #303030;"></div>
<span class="t" id="rp_title" style="top:19.6px;height:16px;line-height:16px;color:#e0e0e0;font-size:11px;letter-spacing:-0.280px;left:512px;">MyCompany_TestAircraft</span>
<div style="position:absolute;left:801px;top:20px;width:20px;height:17.5px;background:#743829;"></div>
<svg style="position:absolute;left:804.5px;top:23px;" width="14" height="12" viewBox="0 0 14 12"><rect x="0" y="0" width="8" height="4" fill="#3e1810"/><rect x="7" y="7" width="6" height="4" fill="#3e1810"/><path d="M3 4V8.5H7" stroke="#3e1810" stroke-width="1.2" fill="none"/></svg>
<div style="position:absolute;left:826.2px;top:20px;width:1.3px;height:39px;background:#626262;"></div>
<div style="position:absolute;left:755.5px;top:44px;width:4px;height:15px;background:transparent;border:1px solid #333;border-radius:2px;"></div>
<svg style="position:absolute;left:763px;top:45.5px;" width="11" height="11" viewBox="0 0 11 11"><rect x="0" y="0" width="11" height="11" rx="1" fill="#e0e0e0"/><path d="M2.2 5.4 L4.6 8 L9 2.6" stroke="#222" stroke-width="1.9" fill="none"/></svg>
<span class="t" id="rp_incl" style="top:44.0px;height:16px;line-height:16px;color:#d0d0d0;font-size:11px;letter-spacing:-0.265px;left:777.7px;">Inclusion</span>
<div style="position:absolute;left:510px;top:279px;width:50px;height:1px;background:#ffcc00;"></div>
<div style="position:absolute;left:20px;top:517.5px;width:267px;height:17.5px;background:#484848;"></div>
<span class="t" id="ph_title" style="top:513.5px;height:16px;line-height:16px;color:#b8b8b8;font-size:11px;letter-spacing:-0.105px;left:24.3px;">Property Help</span>
<div style="position:absolute;left:20px;top:535px;width:267px;height:250px;background:#2b2b2b;"></div>
<span class="t" id="ph_body" style="top:548.0px;height:16px;line-height:16px;color:#d0d0d0;font-size:12px;letter-spacing:0.191px;left:29px;">If a property is selected, this view displays the</span>
<div style="position:absolute;left:286px;top:555px;width:1px;height:2.5px;background:#3458a8;"></div>
<div style="position:absolute;left:20px;top:785px;width:267px;height:2.5px;background:#444;"></div>
<div style="position:absolute;left:20px;top:787.5px;width:267px;height:5px;background:#2b2b2b;"></div>
<div style="position:absolute;left:20px;top:792.5px;width:267px;height:24.5px;background:#484848;"></div>
<span class="t" id="ev_title" style="top:795.5px;height:16px;line-height:16px;color:#c0c0c0;font-size:11px;letter-spacing:-0.174px;left:24.3px;">Event Viewer</span>
<div style="position:absolute;left:579px;top:761px;width:251px;height:56px;background:#3c3c3c;"></div>
<div style="position:absolute;left:290px;top:283px;width:273px;height:534px;background:#222222;border:1px solid #a8a8a8;"></div>
<div style="position:absolute;left:289.5px;top:282.5px;width:270px;height:28px;background:#5a533f;border:3px solid #ffcc00;border-radius:3px;box-shadow:0 0 1.5px #ffcc00;"></div>
<span class="t" id="m1_0" style="top:289.0px;height:16px;line-height:16px;color:#ececec;font-size:11px;letter-spacing:-0.343px;left:324.2px;">New Child</span>
<svg style="position:absolute;left:549px;top:291.5px;" width="6" height="11" viewBox="0 0 6 11"><path d="M0 0 L6 5.5 L0 11 Z" fill="#2a2410"/></svg>
<span class="t" id="m1_1" style="top:311.0px;height:16px;line-height:16px;color:#7a7a7a;font-size:11px;letter-spacing:-0.143px;left:324.2px;">New Parent</span>
<svg style="position:absolute;left:549px;top:313.5px;" width="6" height="11" viewBox="0 0 6 11"><path d="M0 0 L6 5.5 L0 11 Z" fill="#8a8a8a"/></svg>
<span class="t" id="m1_2" style="top:333.0px;height:16px;line-height:16px;color:#7a7a7a;font-size:11px;letter-spacing:-0.050px;left:324.2px;">New Event</span>
<svg style="position:absolute;left:549px;top:335.5px;" width="6" height="11" viewBox="0 0 6 11"><path d="M0 0 L6 5.5 L0 11 Z" fill="#8a8a8a"/></svg>
<div style="position:absolute;left:292.5px;top:353.5px;width:267.5px;height:1px;background:#3d3d3d;"></div>
<span class="t" id="m1_3" style="top:359.0px;height:16px;line-height:16px;color:#ececec;font-size:11px;letter-spacing:-0.160px;left:324.2px;">Delete</span>
<span class="t" id="m1s_3" style="top:359.0px;height:16px;line-height:16px;color:#ececec;font-size:11px;letter-spacing:-0.302px;right:407px;">Delete</span>
<span class="t" id="m1_4" style="top:381.0px;height:16px;line-height:16px;color:#ececec;font-size:11px;letter-spacing:-0.557px;left:324.2px;">Rename</span>
<span class="t" id="m1s_4" style="top:381.0px;height:16px;line-height:16px;color:#ececec;font-size:11px;letter-spacing:-0.844px;right:407px;">F2</span>
<div style="position:absolute;left:292.5px;top:401.5px;width:267.5px;height:1px;background:#3d3d3d;"></div>
<span class="t" id="m1_5" style="top:407.0px;height:16px;line-height:16px;color:#ececec;font-size:11px;letter-spacing:-0.016px;left:324.2px;">Import Audio Files...</span>
<span class="t" id="m1s_5" style="top:407.0px;height:16px;line-height:16px;color:#ececec;font-size:11px;letter-spacing:0.334px;right:407px;">Shift+I</span>
<div style="position:absolute;left:292.5px;top:427.5px;width:267.5px;height:1px;background:#3d3d3d;"></div>
<span class="t" id="m1_6" style="top:433.0px;height:16px;line-height:16px;color:#ececec;font-size:11px;letter-spacing:-0.014px;left:324.2px;">Unload Work Unit (at next project load)</span>
<div style="position:absolute;left:292.5px;top:453.5px;width:267.5px;height:1px;background:#3d3d3d;"></div>
<span class="t" id="m1_7" style="top:459.0px;height:16px;line-height:16px;color:#ececec;font-size:11px;letter-spacing:-0.178px;left:324.2px;">Inclusion</span>
<svg style="position:absolute;left:549px;top:461.5px;" width="6" height="11" viewBox="0 0 6 11"><path d="M0 0 L6 5.5 L0 11 Z" fill="#f4f4f4"/></svg>
<div style="position:absolute;left:292.5px;top:479.5px;width:267.5px;height:1px;background:#3d3d3d;"></div>
<span class="t" id="m1_8" style="top:485.0px;height:16px;line-height:16px;color:#ececec;font-size:11px;letter-spacing:-0.167px;left:324.2px;">Expand Options</span>
<svg style="position:absolute;left:549px;top:487.5px;" width="6" height="11" viewBox="0 0 6 11"><path d="M0 0 L6 5.5 L0 11 Z" fill="#f4f4f4"/></svg>
<div style="position:absolute;left:292.5px;top:505.5px;width:267.5px;height:1px;background:#3d3d3d;"></div>
<span class="t" id="m1_9" style="top:511.0px;height:16px;line-height:16px;color:#ececec;font-size:11px;letter-spacing:0.285px;left:324.2px;">Cut</span>
<span class="t" id="m1s_9" style="top:511.0px;height:16px;line-height:16px;color:#ececec;font-size:11px;letter-spacing:-0.114px;right:407px;">Ctrl+X</span>
<span class="t" id="m1_10" style="top:533.0px;height:16px;line-height:16px;color:#ececec;font-size:11px;letter-spacing:-0.227px;left:324.2px;">Copy</span>
<span class="t" id="m1s_10" style="top:533.0px;height:16px;line-height:16px;color:#ececec;font-size:11px;letter-spacing:0.004px;right:407px;">Ctrl+C</span>
<span class="t" id="m1_11" style="top:555.0px;height:16px;line-height:16px;color:#7a7a7a;font-size:11px;letter-spacing:-0.233px;left:324.2px;">Paste</span>
<span class="t" id="m1s_11" style="top:555.0px;height:16px;line-height:16px;color:#7a7a7a;font-size:11px;letter-spacing:-0.114px;right:407px;">Ctrl+V</span>
<div style="position:absolute;left:292.5px;top:575.5px;width:267.5px;height:1px;background:#3d3d3d;"></div>
<span class="t" id="m1_12" style="top:581.0px;height:16px;line-height:16px;color:#ececec;font-size:11px;letter-spacing:0.080px;left:324.2px;">Set Color...</span>
<div style="position:absolute;left:292.5px;top:601.5px;width:267.5px;height:1px;background:#3d3d3d;"></div>
<span class="t" id="m1_13" style="top:607.0px;height:16px;line-height:16px;color:#ececec;font-size:11px;letter-spacing:-0.194px;left:324.2px;">Profiler</span>
<svg style="position:absolute;left:549px;top:609.5px;" width="6" height="11" viewBox="0 0 6 11"><path d="M0 0 L6 5.5 L0 11 Z" fill="#f4f4f4"/></svg>
<div style="position:absolute;left:292.5px;top:627.5px;width:267.5px;height:1px;background:#3d3d3d;"></div>
<span class="t" id="m1_14" style="top:633.0px;height:16px;line-height:16px;color:#808080;font-size:11px;letter-spacing:-0.094px;font-weight:bold;left:325.2px;">Edit</span>
<span class="t" id="m1_15" style="top:655.0px;height:16px;line-height:16px;color:#ececec;font-size:11px;letter-spacing:-0.301px;left:324.2px;">Show in List View</span>
<span class="t" id="m1s_15" style="top:655.0px;height:16px;line-height:16px;color:#ececec;font-size:11px;letter-spacing:0.147px;right:407px;">Ctrl+Shift+F</span>
<span class="t" id="m1_16" style="top:677.0px;height:16px;line-height:16px;color:#ececec;font-size:11px;letter-spacing:-0.248px;left:324.2px;">Show in Multi Editor</span>
<span class="t" id="m1s_16" style="top:677.0px;height:16px;line-height:16px;color:#ececec;font-size:11px;letter-spacing:-0.040px;right:407px;">Ctrl+M</span>
<span class="t" id="m1_17" style="top:699.0px;height:16px;line-height:16px;color:#ececec;font-size:11px;letter-spacing:-0.355px;left:324.2px;">Show in Schematic View</span>
<span class="t" id="m1s_17" style="top:699.0px;height:16px;line-height:16px;color:#ececec;font-size:11px;letter-spacing:0.090px;right:407px;">Ctrl+Shift+S</span>
<span class="t" id="m1_18" style="top:721.0px;height:16px;line-height:16px;color:#ececec;font-size:11px;letter-spacing:-0.177px;left:324.2px;">Find All References</span>
<span class="t" id="m1s_18" style="top:721.0px;height:16px;line-height:16px;color:#ececec;font-size:11px;letter-spacing:0.003px;right:407px;">Shift+F3</span>
<div style="position:absolute;left:292.5px;top:741.5px;width:267.5px;height:1px;background:#3d3d3d;"></div>
<span class="t" id="m1_19" style="top:747.0px;height:16px;line-height:16px;color:#7a7a7a;font-size:11px;letter-spacing:0.279px;left:324.2px;">Convert...</span>
<span class="t" id="m1s_19" style="top:747.0px;height:16px;line-height:16px;color:#7a7a7a;font-size:11px;letter-spacing:-0.014px;right:407px;">Shift+C</span>
<div style="position:absolute;left:292.5px;top:767.5px;width:267.5px;height:1px;background:#3d3d3d;"></div>
<span class="t" id="m1_20" style="top:773.0px;height:16px;line-height:16px;color:#ececec;font-size:11px;letter-spacing:-0.145px;left:324.2px;">Edit in External Editor</span>
<svg style="position:absolute;left:549px;top:775.5px;" width="6" height="11" viewBox="0 0 6 11"><path d="M0 0 L6 5.5 L0 11 Z" fill="#f4f4f4"/></svg>
<span class="t" id="m1_21" style="top:795.0px;height:16px;line-height:16px;color:#ececec;font-size:11px;letter-spacing:-0.190px;left:324.2px;">Open Containing Folder</span>
<svg style="position:absolute;left:549px;top:797.5px;" width="6" height="11" viewBox="0 0 6 11"><path d="M0 0 L6 5.5 L0 11 Z" fill="#f4f4f4"/></svg>
<div style="position:absolute;left:557px;top:283px;width:273px;height:462px;background:#222222;border:1px solid #a8a8a8;"></div>
<div style="position:absolute;left:556px;top:436.5px;width:274.5px;height:28px;background:#5a533f;border:3px solid #ffcc00;border-radius:3px;box-shadow:0 0 1.5px #ffcc00;"></div>
<div style="position:absolute;left:555px;top:282.5px;width:4.5px;height:28px;background:transparent;border:3px solid #ffcc00;border-left:none;border-radius:0 3px 3px 0;"></div>
<div style="position:absolute;left:555px;top:285.5px;width:1.5px;height:22px;background:#5a533f;"></div>
<span class="t" id="m2_0" style="top:289.0px;height:16px;line-height:16px;color:#ececec;font-size:11px;letter-spacing:-0.137px;left:591.7px;">Work Unit</span>
<svg style="position:absolute;left:565.7px;top:291.3px;" width="11.16" height="11.532000000000002" viewBox="0 0 12 12.4"><path d="M6 0 L12 3 L12 9.4 L6 12.4 L0 9.4 L0 3 Z" fill="#d2d2d2"/><path d="M3.7 3.4 V6.2 A2.3 2.3 0 0 0 8.3 6.2 V3.4" fill="none" stroke="#222222" stroke-width="2.3"/></svg>
<span class="t" id="m2_1" style="top:311.0px;height:16px;line-height:16px;color:#ececec;font-size:11px;letter-spacing:-0.256px;left:591.7px;">Virtual Folder</span>
<span class="t" id="m2s_1" style="top:311.0px;height:16px;line-height:16px;color:#ececec;font-size:11px;letter-spacing:0.257px;right:139.5px;">Ctrl+Shift+Alt+F</span>
<svg style="position:absolute;left:564.8px;top:313.8px;" width="13.2" height="11.2" viewBox="0 0 13.2 11.2"><path d="M0.6 0.6 H6.3 V2.8 H12.6 V10.6 H0.6 Z" fill="#7e7e7e" stroke="#dedede" stroke-width="1.4"/><path d="M1.2 3.4H6.6" stroke="#dedede" stroke-width="0.6" opacity="0.5"/></svg>
<span class="t" id="m2_2" style="top:333.0px;height:16px;line-height:16px;color:#ececec;font-size:11px;letter-spacing:-0.093px;left:591.7px;">Actor-Mixer</span>
<span class="t" id="m2s_2" style="top:333.0px;height:16px;line-height:16px;color:#ececec;font-size:11px;letter-spacing:0.295px;right:139.5px;">Ctrl+Shift+Alt+A</span>
<svg style="position:absolute;left:564.8px;top:335.5px;" width="13.2" height="12" viewBox="0 0 13.2 12"><path d="M0 2H13.2 M0 6H13.2 M0 10H13.2" stroke="#cfcfcf" stroke-width="0.9"/><rect x="6.2" y="0" width="2.2" height="4" fill="#f4f4f4"/><rect x="3.1" y="4" width="2.2" height="4" fill="#f4f4f4"/><rect x="8.1" y="8" width="2.2" height="4" fill="#f4f4f4"/></svg>
<span class="t" id="m2_3" style="top:355.0px;height:16px;line-height:16px;color:#ececec;font-size:11px;letter-spacing:-0.197px;left:591.7px;">Switch Container</span>
<span class="t" id="m2s_3" style="top:355.0px;height:16px;line-height:16px;color:#ececec;font-size:11px;letter-spacing:0.286px;right:139.5px;">Ctrl+Shift+Alt+W</span>
<svg style="position:absolute;left:565px;top:357px;" width="13" height="12" viewBox="0 0 13 12"><path d="M0 6H2.5 M2.5 0.5V11.5" stroke="#e8e8e8" stroke-width="1.3" fill="none"/><rect x="4.5" y="0.5" width="3" height="3" fill="#e8e8e8"/><rect x="4.5" y="4.5" width="3" height="3" fill="#b0b0b0"/><rect x="4.5" y="8.5" width="3" height="3" fill="#e8e8e8"/><path d="M9 10.5 H10.7 V6 H13" stroke="#e8e8e8" stroke-width="1.2" fill="none"/></svg>
<span class="t" id="m2_4" style="top:377.0px;height:16px;line-height:16px;color:#ececec;font-size:11px;letter-spacing:-0.283px;left:591.7px;">Random Container</span>
<span class="t" id="m2s_4" style="top:377.0px;height:16px;line-height:16px;color:#ececec;font-size:11px;letter-spacing:0.255px;right:139.5px;">Ctrl+Shift+Alt+R</span>
<svg style="position:absolute;left:566px;top:379.5px;" width="11" height="11" viewBox="0 0 11 11"><rect x="0" y="0" width="3" height="3" fill="#f0f0f0"/><rect x="4" y="0" width="3" height="3" fill="#9a9a9a"/><rect x="8" y="0" width="3" height="3" fill="#f0f0f0"/><rect x="0" y="4" width="3" height="3" fill="#f0f0f0"/><rect x="4" y="4" width="3" height="3" fill="#f0f0f0"/><rect x="8" y="4" width="3" height="3" fill="#9a9a9a"/><rect x="0" y="8" width="3" height="3" fill="#9a9a9a"/><rect x="4" y="8" width="3" height="3" fill="#9a9a9a"/><rect x="8" y="8" width="3" height="3" fill="#f0f0f0"/></svg>
<span class="t" id="m2_5" style="top:399.0px;height:16px;line-height:16px;color:#ececec;font-size:11px;letter-spacing:-0.235px;left:591.7px;">Sequence Container</span>
<span class="t" id="m2s_5" style="top:399.0px;height:16px;line-height:16px;color:#ececec;font-size:11px;letter-spacing:0.281px;right:139.5px;">Ctrl+Shift+Alt+Q</span>
<svg style="position:absolute;left:565.5px;top:401.5px;" width="12" height="11" viewBox="0 0 12 11"><rect x="0" y="0" width="12" height="3" fill="#dedede"/><rect x="0" y="4" width="12" height="3" fill="#a0a0a0"/><rect x="0" y="8" width="12" height="3" fill="#a0a0a0"/></svg>
<span class="t" id="m2_6" style="top:421.0px;height:16px;line-height:16px;color:#ececec;font-size:11px;letter-spacing:-0.271px;left:591.7px;">Blend Container</span>
<span class="t" id="m2s_6" style="top:421.0px;height:16px;line-height:16px;color:#ececec;font-size:11px;letter-spacing:0.255px;right:139.5px;">Ctrl+Shift+Alt+D</span>
<svg style="position:absolute;left:565px;top:424.5px;" width="13" height="10" viewBox="0 0 13 10"><path d="M0 1 H3.4 C6.2 1 6.8 9 9.6 9 H13" stroke="#dadada" stroke-width="1.05" fill="none"/><path d="M0 9 H3.4 C6.2 9 6.8 1 9.6 1 H13" stroke="#dadada" stroke-width="1.05" fill="none"/><path d="M0.6 5 H4.6 M8.4 5 H12.4" stroke="#dadada" stroke-width="1" fill="none"/></svg>
<span class="t" id="m2_7" style="top:443.0px;height:16px;line-height:16px;color:#ececec;font-size:11px;letter-spacing:-0.721px;left:591.7px;">Sound SFX</span>
<span class="t" id="m2s_7" style="top:443.0px;height:16px;line-height:16px;color:#ececec;font-size:11px;letter-spacing:0.215px;right:139.5px;">Ctrl+Shift+Alt+S</span>
<svg style="position:absolute;left:565px;top:444.5px;" width="13.5" height="13.5" viewBox="0 0 13.5 13.5"><path d="M5.5 4.4 L6.6 1.3 M8.3 5.8 L12.3 1.3 M9.8 8.1 L12.4 7.1" stroke-linecap="round" fill="none" stroke="#2e2a1e" stroke-width="3.4"/><ellipse cx="5.9" cy="7.7" rx="5.6" ry="3.4" transform="rotate(40 5.9 7.7)" fill="#2e2a1e" stroke="#2e2a1e" stroke-width="1.6"/><path d="M0.7 8.6 Q1.6 11.8 5 12.9" fill="none" stroke-linecap="round" stroke="#2e2a1e" stroke-width="2.8"/><path d="M5.5 4.4 L6.6 1.3 M8.3 5.8 L12.3 1.3 M9.8 8.1 L12.4 7.1" stroke-linecap="round" fill="none" stroke="#d8d1bc" stroke-width="1.9"/><ellipse cx="5.9" cy="7.7" rx="5.6" ry="3.4" transform="rotate(40 5.9 7.7)" fill="#d8d1bc"/><path d="M0.7 8.6 Q1.6 11.8 5 12.9" fill="none" stroke-linecap="round" stroke="#d8d1bc" stroke-width="1.3"/><path d="M3.6 6.9 L6.2 9.3" stroke="#2e2a1e" stroke-width="1.3" stroke-linecap="round"/></svg>
<span class="t" id="m2_8" style="top:465.0px;height:16px;line-height:16px;color:#ececec;font-size:11px;letter-spacing:-0.438px;left:591.7px;">Sound Voice</span>
<span class="t" id="m2s_8" style="top:465.0px;height:16px;line-height:16px;color:#ececec;font-size:11px;letter-spacing:0.215px;right:139.5px;">Ctrl+Shift+Alt+V</span>
<svg style="position:absolute;left:565px;top:466.2px;" width="15.5" height="14.5" viewBox="-0.5 -0.8 15.5 14.5"><path d="M0.6 1.4 Q0.6 0 2 0 H5.6 Q7.2 0 7.2 1.8 V3.6 L8.6 5.6 L7.4 6.4 V7.6 L4.6 8.8 L7.4 9.8 V11.8 Q6.4 13.2 4.4 13.2 H0.6 Z" fill="#222222" stroke="#222222" stroke-width="1.5" stroke-linejoin="round"/><path d="M9.4 7.2 Q11 9.4 9.4 11.6 M11.6 4.8 Q14.6 9.4 11.6 13.6" stroke="#222222" stroke-width="2.8" fill="none" stroke-linecap="round"/><path d="M0.6 1.4 Q0.6 0 2 0 H5.6 Q7.2 0 7.2 1.8 V3.6 L8.6 5.6 L7.4 6.4 V7.6 L4.6 8.8 L7.4 9.8 V11.8 Q6.4 13.2 4.4 13.2 H0.6 Z" fill="#d0d0d0"/><path d="M2.2 3.2 Q3.6 1.2 5.8 2 M3.4 4 H5.4" stroke="#222222" stroke-width="1.1" fill="none"/><path d="M9.4 7.2 Q11 9.4 9.4 11.6 M11.6 4.8 Q14.6 9.4 11.6 13.6" stroke="#d0d0d0" stroke-width="1.3" fill="none" stroke-linecap="round"/></svg>
<div style="position:absolute;left:560px;top:485.5px;width:267px;height:1px;background:#3d3d3d;"></div>
<span class="t" id="m2_9" style="top:491.0px;height:16px;line-height:16px;color:#7a7a7a;font-size:11px;letter-spacing:-0.267px;left:591.7px;">Presets</span>
<svg style="position:absolute;left:816px;top:493.5px;" width="6" height="11" viewBox="0 0 6 11"><path d="M0 0 L6 5.5 L0 11 Z" fill="#8a8a8a"/></svg>
<div style="position:absolute;left:560px;top:511.5px;width:267px;height:1px;background:#3d3d3d;"></div>
<span class="t" id="m2_10" style="top:517.0px;height:16px;line-height:16px;color:#ececec;font-size:11px;letter-spacing:-0.289px;left:591.7px;">SoundSeed Air Wind</span>
<span class="t" id="m2_11" style="top:539.0px;height:16px;line-height:16px;color:#ececec;font-size:11px;letter-spacing:-0.283px;left:591.7px;">SoundSeed Air Woosh</span>
<div style="position:absolute;left:560px;top:559.5px;width:267px;height:1px;background:#3d3d3d;"></div>
<span class="t" id="m2_12" style="top:565.0px;height:16px;line-height:16px;color:#ececec;font-size:11px;letter-spacing:-0.031px;left:591.7px;">Wwise Audio Input</span>
<span class="t" id="m2_13" style="top:587.0px;height:16px;line-height:16px;color:#ececec;font-size:11px;letter-spacing:-0.106px;left:591.7px;">Wwise Motion Generator (Deprecated)</span>
<span class="t" id="m2_14" style="top:609.0px;height:16px;line-height:16px;color:#ececec;font-size:11px;letter-spacing:-0.282px;left:591.7px;">Wwise Motion Source</span>
<span class="t" id="m2_15" style="top:631.0px;height:16px;line-height:16px;color:#ececec;font-size:11px;letter-spacing:-0.436px;left:591.7px;">Wwise Silence</span>
<span class="t" id="m2_16" style="top:653.0px;height:16px;line-height:16px;color:#ececec;font-size:11px;letter-spacing:-0.463px;left:591.7px;">Wwise Sine</span>
<span class="t" id="m2_17" style="top:675.0px;height:16px;line-height:16px;color:#ececec;font-size:11px;letter-spacing:-0.223px;left:591.7px;">Wwise Synth One</span>
<span class="t" id="m2_18" style="top:697.0px;height:16px;line-height:16px;color:#ececec;font-size:11px;letter-spacing:-0.131px;left:591.7px;">Wwise Tone Generator</span>
<div style="position:absolute;left:560px;top:717.5px;width:267px;height:1px;background:#3d3d3d;"></div>
<span class="t" id="m2_19" style="top:723.0px;height:16px;line-height:16px;color:#ececec;font-size:11px;letter-spacing:-0.226px;left:591.7px;">Wwise External Source</span>
<div style="position:absolute;left:847px;top:380px;width:93px;height:82px;background:#000;"></div>
<svg style="position:absolute;left:800px;top:360px;" width="150" height="120" viewBox="0 0 150 120"><path d="M24.3 88.1 L55.3 45.8 L64.7 59.2 L124 26.5 L127.6 33.2 L70.7 67.1 L77.4 82.9 Z" fill="#000" stroke="#000" stroke-width="5.5" stroke-linejoin="miter" stroke-miterlimit="10"/><path d="M24.3 88.1 L55.3 45.8 L64.7 59.2 L124 26.5 L127.6 33.2 L70.7 67.1 L77.4 82.9 Z" fill="#ffc800"/></svg>
</body></html>
